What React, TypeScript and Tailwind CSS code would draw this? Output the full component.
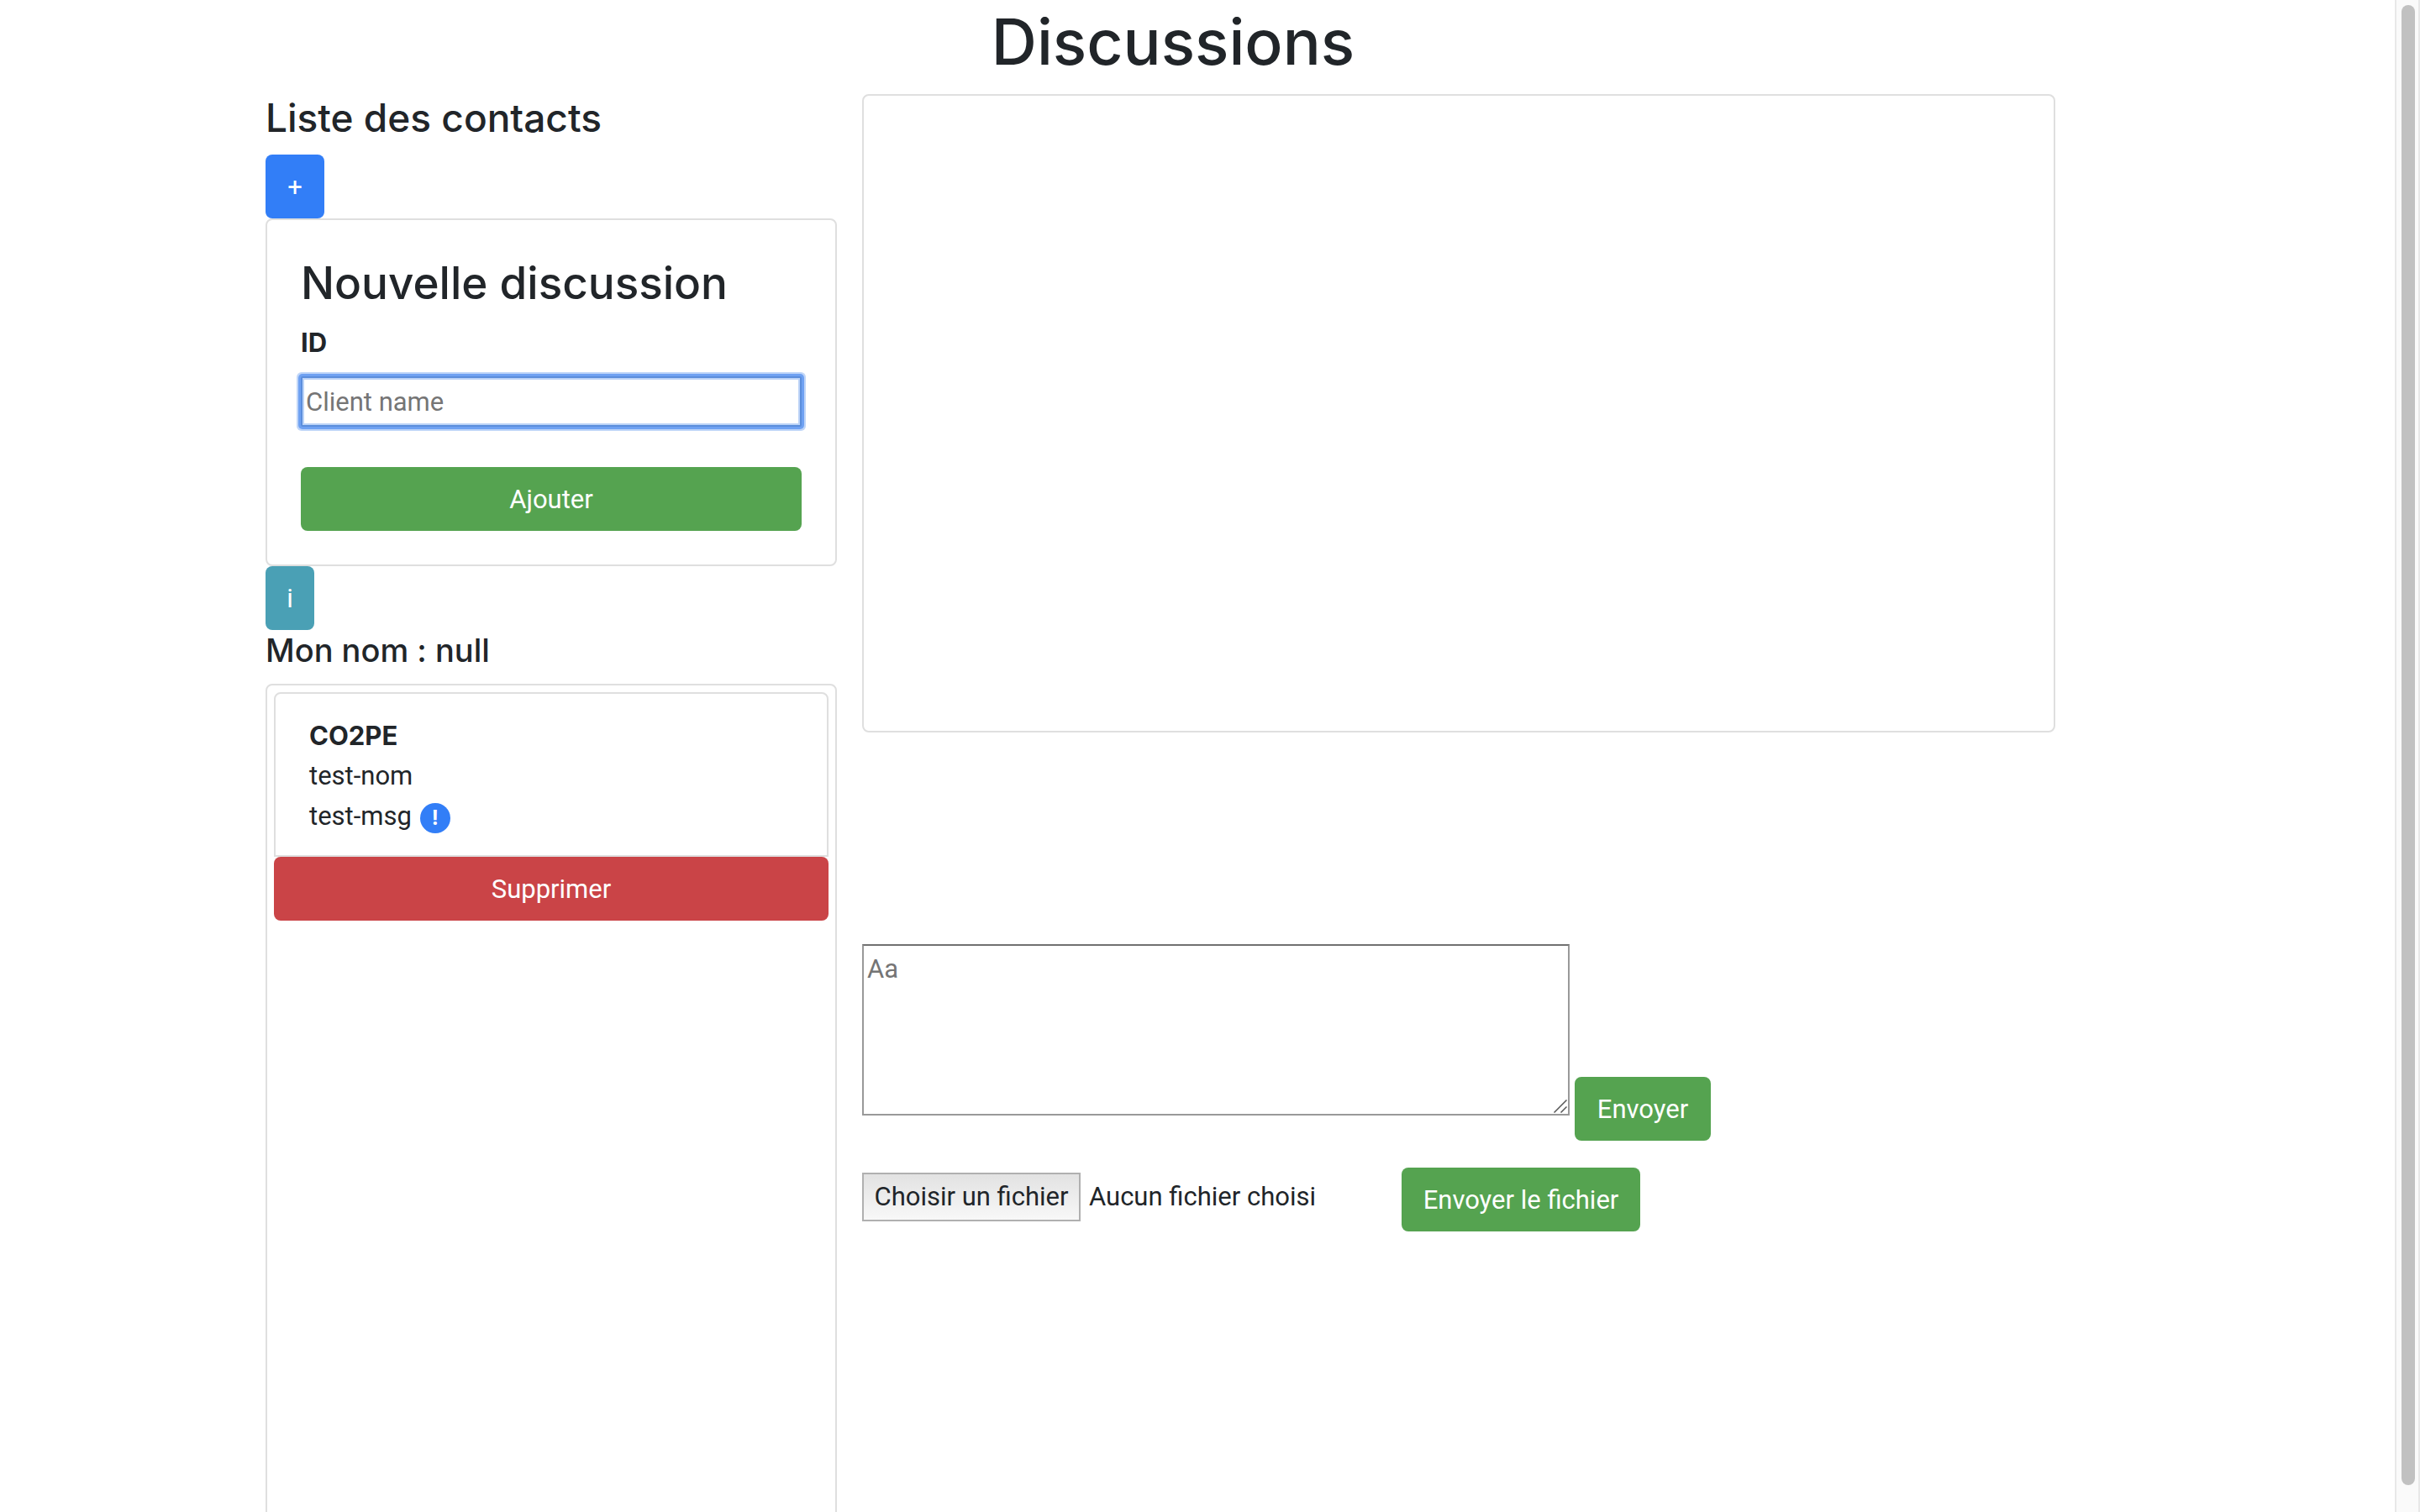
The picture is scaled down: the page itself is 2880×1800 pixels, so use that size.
import React from "react";

const btn =
  "h-[76px] rounded-lg pt-[2px] text-center text-[31px] leading-[48px] text-white cursor-pointer";

function NewDiscussion() {
  return (
    <form className="rounded-lg border-2 border-[#dfdfdf] p-10">
      <h2 className="pb-[14px] pt-[2px] font-[Inter,sans-serif] text-[53px] font-medium leading-[66px]">
        Nouvelle discussion
      </h2>
      <label
        htmlFor="client"
        className="mb-4 block font-[Inter,sans-serif] text-[31px] font-bold leading-[48px]"
      >
        ID
      </label>
      <input
        id="client"
        type="text"
        placeholder="Client name"
        className="mb-12 block h-[60px] w-full rounded-[2px] border-2 border-[#5b8edc] bg-white px-1 text-[31px] leading-[48px] shadow-[0_0_0_3px_#6fa1f2,0_0_0_5px_#c0d6f8,inset_0_0_0_2px_#bcd3f7] outline-none placeholder:text-[#757575]"
      />
      <button type="button" className={`${btn} block w-full bg-[#55a350]`}>
        Ajouter
      </button>
    </form>
  );
}

function ContactList() {
  return (
    <section className="min-h-[1200px] rounded-lg border-2 border-[#dfdfdf] p-2">
      <div className="rounded-t-lg border-2 border-[#dfdfdf] px-10 pb-[22px] pt-[26px] text-[31px] leading-[48px]">
        <p className="font-[Inter,sans-serif] font-bold">CO2PE</p>
        <p>test-nom</p>
        <p className="flex items-center gap-[10px]">
          test-msg
          <span className="mt-1 flex size-9 items-center justify-center rounded-full bg-[#327ef7] font-[Inter,sans-serif] text-2xl font-bold leading-none text-white">
            !
          </span>
        </p>
      </div>
      <button type="button" className={`${btn} block w-full bg-[#ca4447]`}>
        Supprimer
      </button>
    </section>
  );
}

function Composer() {
  return (
    <form className="mt-[252px] flex items-end gap-[6px]">
      <div className="relative mb-[30px] w-[842px]">
        <textarea
          aria-label="Message"
          rows={4}
          placeholder="Aa"
          className="block w-full resize-none border-2 border-x-[#999999] border-b-[#999999] border-t-[#717171] bg-white p-1 text-[31px] leading-[48px] outline-none placeholder:text-[#757575]"
        />
        <svg
          aria-hidden="true"
          className="absolute bottom-[3px] right-[3px] size-4"
          viewBox="0 0 16 16"
          stroke="#555"
          strokeWidth="1.5"
          fill="none"
        >
          <path d="M0.5 15.5 L15.5 0.5 M8.5 15.5 L15.5 8.5" />
        </svg>
      </div>
      <button type="button" className={`${btn} w-[162px] bg-[#55a350]`}>
        Envoyer
      </button>
    </form>
  );
}

function FileRow() {
  return (
    <form className="mt-8 flex items-center">
      <label className="mb-[6px] flex w-[642px] cursor-pointer items-center gap-[10px] text-[31px] leading-[54px]">
        <input type="file" className="sr-only" />
        <span className="w-[260px] border-2 border-[#b0b0b0] bg-linear-to-b from-[#e2e2e2] to-[#f8f8f8] text-center">
          Choisir un fichier
        </span>
        <span>Aucun fichier choisi</span>
      </label>
      <button type="button" className={`${btn} w-[284px] bg-[#55a350]`}>
        Envoyer le fichier
      </button>
    </form>
  );
}

export default function App() {
  return (
    <div className="flex h-screen overflow-hidden bg-white font-[Roboto,Inter,sans-serif] text-[#212529]">
      <main className="min-w-0 flex-1">
        <div className="mx-auto max-w-[2278px] px-[30px]">
          <div className="mr-[58px]">
            <h1 className="pb-[14px] pt-[2px] text-center font-[Inter,sans-serif] text-[75px] font-medium leading-[96px]">
              Discussions
            </h1>
          </div>
          <div className="mr-[88px] grid grid-cols-[34fr_71fr] gap-[30px]">
            <div>
              <h4 className="mb-4 font-[Inter,sans-serif] text-[46px] font-medium leading-[56px]">
                Liste des contacts
              </h4>
              <button type="button" className={`${btn} block w-[70px] bg-[#327ef7]`}>
                +
              </button>
              <NewDiscussion />
              <button type="button" className={`${btn} block w-[58px] bg-[#4aa0b5]`}>
                i
              </button>
              <h5 className="mb-4 font-[Inter,sans-serif] text-[38px] font-medium leading-[48px]">
                Mon nom : null
              </h5>
              <ContactList />
            </div>
            <div>
              <section
                aria-label="Messages"
                className="h-[760px] rounded-lg border-2 border-[#dfdfdf]"
              />
              <Composer />
              <FileRow />
            </div>
          </div>
        </div>
      </main>
      <div
        aria-hidden="true"
        className="w-[30px] shrink-0 border-x-2 border-[#e8e8e8] bg-[#fafafa] pb-8 pl-[6px] pt-[6px]"
      >
        <div className="h-full w-4 rounded-full bg-[#c1c1c1]" />
      </div>
    </div>
  );
}
